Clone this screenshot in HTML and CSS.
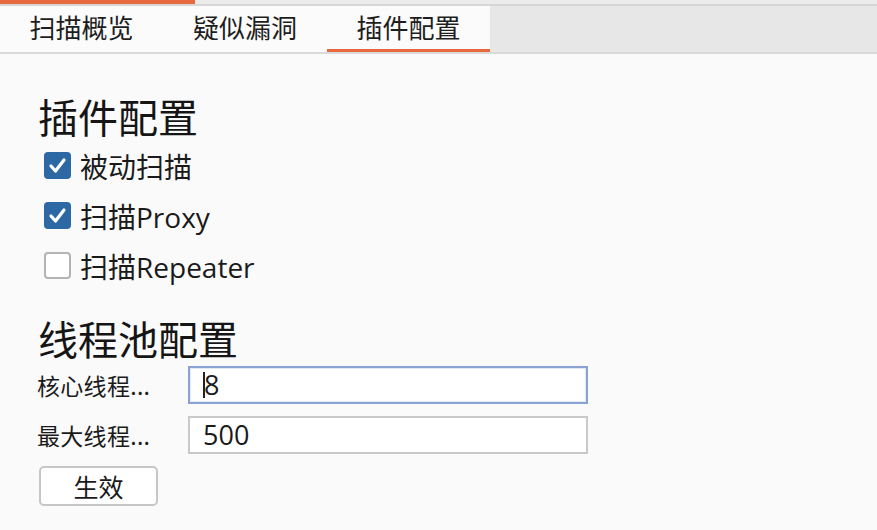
FILE: index.html
```html
<!DOCTYPE html>
<html lang="zh-CN">
<head>
<meta charset="utf-8">
<title>插件配置</title>
<link rel="stylesheet" href="styles.css">
</head>
<body>
<div class="topstrip"><div class="progress"></div></div>
<div class="tabbar">
  <div class="tab">扫描概览</div>
  <div class="tab tab-mid">疑似漏洞</div>
  <div class="tab active">插件配置</div>
</div>
<div class="content">
  <h2 class="section-title">插件配置</h2>
  <label class="check-row"><span class="box checked"><svg viewBox="0 0 27 27" width="27" height="27"><path d="M7 14 L11.5 19 L20 8" fill="none" stroke="#fff" stroke-width="3.2" stroke-linecap="round" stroke-linejoin="round"/></svg></span><span class="check-text">被动扫描</span></label>
  <label class="check-row"><span class="box checked"><svg viewBox="0 0 27 27" width="27" height="27"><path d="M7 14 L11.5 19 L20 8" fill="none" stroke="#fff" stroke-width="3.2" stroke-linecap="round" stroke-linejoin="round"/></svg></span><span class="check-text">扫描Proxy</span></label>
  <label class="check-row"><span class="box"></span><span class="check-text">扫描Repeater</span></label>
  <h2 class="section-title second">线程池配置</h2>
  <div class="field-row"><span class="field-label">核心线程...</span><div class="input focused"><span class="caret"></span>8</div></div>
  <div class="field-row"><span class="field-label">最大线程...</span><div class="input">500</div></div>
  <div class="btn">生效</div>
</div>
</body>
</html>
```
FILE: styles.css
```css
* { box-sizing: border-box; }
body {
  margin: 0;
  background: #fafafa;
  font-family: "Open Sans", "Noto Sans CJK SC", sans-serif;
  color: #1a1a1a;
  width: 877px;
  height: 530px;
  overflow: hidden;
}
.topstrip {
  height: 6px;
  background: #ebebeb;
  border-bottom: 2px solid #d6d6d6;
}
.progress {
  width: 195px;
  height: 4px;
  background: #e8693d;
}
.tabbar {
  display: flex;
  height: 48px;
  background: #e7e7e7;
  border-bottom: 2px solid #dadada;
}
.tab {
  width: 163px;
  background: #fbfbfb;
  font-family: "Noto Sans CJK SC", sans-serif;
  font-size: 26px;
  line-height: 42px;
  text-align: center;
  color: #1e1e1e;
  border-bottom: 3px solid transparent;
}
.tab-mid { width: 164px; }
.tab.active { border-bottom-color: #e8693d; }
.content {
  padding: 38px 0 0 38px;
}
.section-title {
  margin: 0;
  font-family: "Noto Sans CJK SC", sans-serif;
  font-weight: 400;
  font-size: 40px;
  line-height: 48px;
  color: #151515;
}
.section-title.second { margin-top: 24px; margin-bottom: 4px; }
.check-row {
  display: flex;
  align-items: center;
  height: 50px;
  padding-left: 6px;
  gap: 9px;
}
.box {
  width: 27px;
  height: 27px;
  border-radius: 4px;
  border: 2px solid #b4b4b4;
  background: #fff;
  flex: none;
}
.box.checked {
  border: none;
  background: #2b68a4;
}
.box svg { display: block; }
.check-text {
  font-size: 28px;
  line-height: 34px;
  padding-top: 4px;
  color: #1a1a1a;
}
.field-row {
  display: flex;
  align-items: center;
  height: 38px;
  margin-bottom: 12px;
  margin-left: -1px;
}
.field-label {
  width: 151px;
  font-family: "Noto Sans CJK SC", sans-serif;
  font-size: 23px;
  line-height: 30px;
  letter-spacing: 0.3px;
  color: #1a1a1a;
  flex: none;
}
.input {
  width: 400px;
  height: 38px;
  background: #fff;
  border: 2px solid #c9c9c9;
  font-size: 27px;
  line-height: 34px;
  padding-left: 13px;
  display: flex;
  align-items: center;
}
.input.focused {
  border-color: #8aa3d3;
  box-shadow: inset 0 0 0 1px #dfe8f7;
}
.caret {
  width: 2px;
  height: 26px;
  background: #222;
  margin-right: -1px;
}
.btn {
  width: 119px;
  height: 40px;
  margin-left: 1px;
  border: 2px solid #c6c6c6;
  border-radius: 5px;
  background: #fff;
  font-family: "Noto Sans CJK SC", sans-serif;
  font-size: 25px;
  line-height: 36px;
  text-align: center;
  color: #1a1a1a;
}
```
